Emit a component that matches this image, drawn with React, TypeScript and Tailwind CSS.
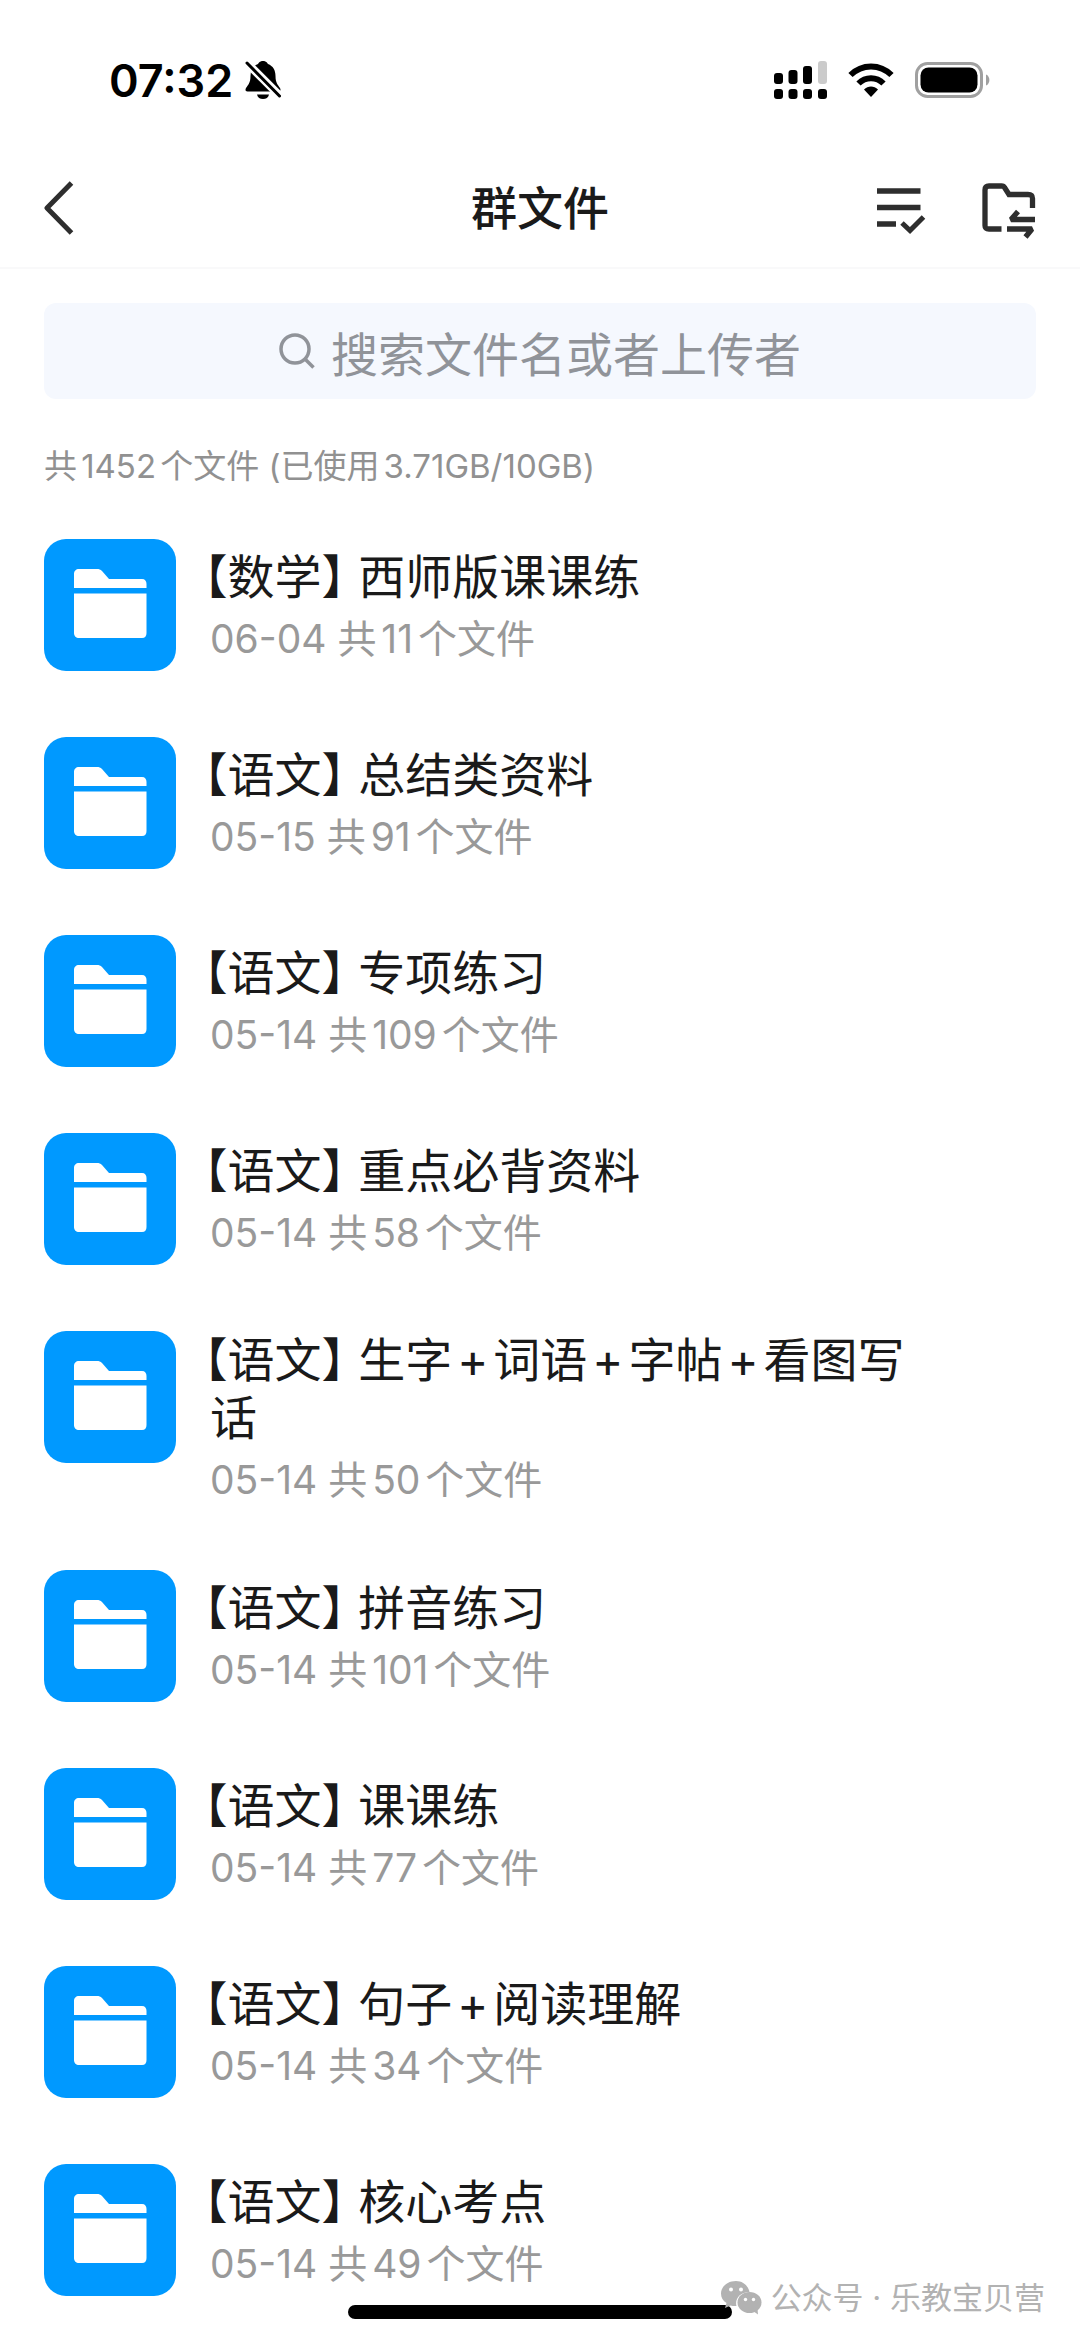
import { Fragment } from 'react';

interface Folder {
  subject: string;
  name: string;
  date: string;
  count: number;
}

const folders: Folder[] = [
  { subject: '数学', name: '西师版课课练', date: '06-04', count: 11 },
  { subject: '语文', name: '总结类资料', date: '05-15', count: 91 },
  { subject: '语文', name: '专项练习', date: '05-14', count: 109 },
  { subject: '语文', name: '重点必背资料', date: '05-14', count: 58 },
  { subject: '语文', name: '生字+词语+字帖+看图写话', date: '05-14', count: 50 },
  { subject: '语文', name: '拼音练习', date: '05-14', count: 101 },
  { subject: '语文', name: '课课练', date: '05-14', count: 77 },
  { subject: '语文', name: '句子+阅读理解', date: '05-14', count: 34 },
  { subject: '语文', name: '核心考点', date: '05-14', count: 49 },
];

function StatusBar() {
  return (
    <div className="flex h-40 items-center justify-between pl-[109px] pr-[90px] text-black">
      <div className="flex items-center gap-3">
        <span className="text-[45px] leading-none font-semibold">07:32</span>
        <svg width="36" height="40" viewBox="0 0 36 40" aria-label="静音">
          <path
            d="M18 1C14.500 1 13.500 3.500 13 4C8 6 5.500 10 5.500 16C5.500 23 3 25 1 28C0 30 .5 31.500 2.500 31.500H33.500C35.500 31.500 36 30 35 28C33 25 30.500 23 30.500 16C30.500 10 28 6 23 4C22.500 3.500 21.500 1 18 1Z"
            fill="currentColor"
          />
          <path d="M12 34.500H24C23.500 37.500 21 39 18 39C15 39 12.500 37.500 12 34.500Z" fill="currentColor" />
          <path d="M0 1L36 37" stroke="#fff" strokeWidth="8" />
          <path d="M2 3L34.500 36" stroke="currentColor" strokeWidth="3" strokeLinecap="round" />
        </svg>
      </div>
      <div className="flex items-center gap-[21px]">
        <svg width="53" height="38" viewBox="0 0 53 38" fill="currentColor" aria-label="信号">
          <rect x="0" y="12" width="9" height="11" rx="3" />
          <rect x="14.500" y="9" width="9" height="14" rx="3" />
          <rect x="29" y="5" width="9" height="18" rx="3" />
          <rect x="44" y="0" width="9" height="23" rx="3" fill="#cbcbcb" />
          <rect x="0" y="28" width="9" height="10" rx="3" />
          <rect x="14.500" y="28" width="9" height="10" rx="3" />
          <rect x="29" y="28" width="9" height="10" rx="3" />
          <rect x="44" y="28" width="9" height="10" rx="3" />
        </svg>
        <svg width="46" height="34" viewBox="0 0 46 34" fill="none" stroke="currentColor" strokeWidth="6" aria-label="Wi-Fi">
          <path d="M2.500 12C14 .5 32 .5 43.500 12" />
          <path d="M10.500 20.500C17.500 13.500 28.500 13.500 35.500 20.500" />
          <path d="M16 26.500C20 22.500 26 22.500 30 26.500L23 34Z" fill="currentColor" stroke="none" />
        </svg>
        <svg width="75" height="36" viewBox="0 0 75 36" aria-label="电量">
          <rect x="1.500" y="1.500" width="65" height="33" rx="11" fill="none" stroke="#a0a0a0" strokeWidth="3" />
          <rect x="5.500" y="5.500" width="57" height="25" rx="8" fill="currentColor" />
          <path d="M71 12.500C75.500 14 75.500 22 71 23.500Z" fill="#a0a0a0" />
        </svg>
      </div>
    </div>
  );
}

function Header() {
  return (
    <header className="grid h-[109px] grid-cols-[1fr_auto_1fr] items-center border-b-2 border-[#f9f9fa] px-11 pb-3 text-[#2e2e2e]">
      <button type="button" aria-label="返回" className="justify-self-start">
        <svg width="30" height="54" viewBox="0 0 30 54" fill="none" stroke="currentColor" strokeWidth="5">
          <path d="M27.500 2L3 27L27.500 52" strokeLinejoin="round" />
        </svg>
      </button>
      <h1 className="text-[46px] leading-none font-medium text-[#1a1a1a]">群文件</h1>
      <div className="flex items-center gap-14 justify-self-end pt-1.5">
        <button type="button" aria-label="多选">
          <svg width="49" height="46" viewBox="0 0 49 46" fill="none" stroke="currentColor">
            <path d="M0 3H43.500M0 19.500H43.500M0 36H19" strokeWidth="5.500" />
            <path d="M25 35L33 42.500L46.500 29" strokeWidth="5" />
          </svg>
        </button>
        <button type="button" aria-label="传输列表">
          <svg width="54" height="56" viewBox="0 0 54 56" fill="none" stroke="currentColor" strokeWidth="5.300">
            <path d="M19.500 46H7C4 46 3 45 3 42.500V7C3 4 4.500 3 7 3H19.500C21 3 22 3.500 22.500 4.500L27 11.500H46C49 11.500 50.500 12.500 50.500 15.500V25" />
            <path d="M53 36.500H29L36 28.500" strokeLinejoin="bevel" />
            <path d="M25 46H50L43.500 54" strokeLinejoin="bevel" />
          </svg>
        </button>
      </div>
    </header>
  );
}

function SearchBox() {
  return (
    <label className="mx-11 mt-[34px] flex h-24 items-center justify-center gap-4 rounded-xl bg-[#f5f8fe] text-[#909399]">
      <svg width="36" height="36" viewBox="0 0 36 36" fill="none" stroke="currentColor" strokeWidth="3.500">
        <circle cx="16" cy="16" r="14" />
        <path d="M26 26L34.500 34.500" />
      </svg>
      <input
        type="search"
        aria-label="搜索"
        placeholder="搜索文件名或者上传者"
        className="field-sizing-content text-[47px] leading-none outline-none placeholder:text-[#909399]"
      />
    </label>
  );
}

function FolderIcon() {
  return (
    <div className="size-[132px] shrink-0 rounded-[22px] bg-[#0099ff]">
      <svg viewBox="0 0 132 132" fill="#fff">
        <path d="M30 49V35C30 32 32 30 35 30H53C55 30 56.500 30.500 58 32L65 40H98C101 40 102.500 42 102.500 45V49Z" />
        <path d="M30 54.500H102.500V94C102.500 97 101 99 98 99H35C32 99 30 97 30 94Z" />
      </svg>
    </div>
  );
}

function FolderRow({ folder }: { folder: Folder }) {
  const parts = `【${folder.subject}】 ${folder.name}`.split('+');

  return (
    <li>
      <a href="#" className="flex gap-[34px]">
        <FolderIcon />
        <div className="max-w-[720px] self-center">
          {/* half-width bracket hangs a little so the title lines up with the date */}
          <h2 className="-indent-1.5 text-[47px] leading-[58px] text-[#1a1a1a] [font-feature-settings:'halt']">
            {parts.map((part, i) => (
              <Fragment key={i}>
                {i > 0 && <span className="mx-[5px]">+</span>}
                {part}
              </Fragment>
            ))}
          </h2>
          <p className="mt-[9px] text-[39px] leading-[48px] text-[#999]">
            {`${folder.date} 共${folder.count}个文件`}
          </p>
        </div>
      </a>
    </li>
  );
}

function Watermark() {
  return (
    <div className="absolute right-[35px] bottom-6 flex items-center gap-2 text-[#b2b2b2]">
      <svg width="42" height="34" viewBox="0 0 42 34" fill="currentColor" aria-hidden="true">
        <path d="M15 0C6.500 0 0 5.500 0 12.500C0 16.500 2 20 5.500 22L4 27L9.500 24.500C11.500 25 13.500 25.200 15.500 25C13.500 18 19 11 28.500 11C27 4.500 22 0 15 0Z" />
        <ellipse cx="28.500" cy="21.500" rx="12" ry="10.500" />
        <path d="M32 30L37 33.500L36.500 28Z" />
        <circle cx="10" cy="8.500" r="2" fill="#fff" />
        <circle cx="20" cy="8.500" r="2" fill="#fff" />
        <circle cx="24.500" cy="18.500" r="1.700" fill="#fff" />
        <circle cx="32.500" cy="18.500" r="1.700" fill="#fff" />
      </svg>
      <span className="text-[31px] leading-[38px]">公众号 · 乐教宝贝营</span>
    </div>
  );
}

export default function App() {
  return (
    <div
      lang="zh-CN"
      className="relative min-h-screen bg-white pb-11 font-['Inter','Noto_Sans_CJK_SC',sans-serif] [text-autospace:normal]"
    >
      <StatusBar />
      <Header />
      <main>
        <SearchBox />
        <p className="mx-11 mt-11 text-[33px] leading-[46px] text-[#919191]">
          共1452个文件 (已使用3.71GB/10GB)
        </p>
        <ul className="mx-11 mt-[50px] flex flex-col gap-[66px]">
          {folders.map((folder) => (
            <FolderRow key={folder.subject + folder.name} folder={folder} />
          ))}
        </ul>
      </main>
      <div className="absolute bottom-[22px] left-1/2 h-3.5 w-96 -translate-x-1/2 rounded-full bg-black" />
      <Watermark />
    </div>
  );
}
